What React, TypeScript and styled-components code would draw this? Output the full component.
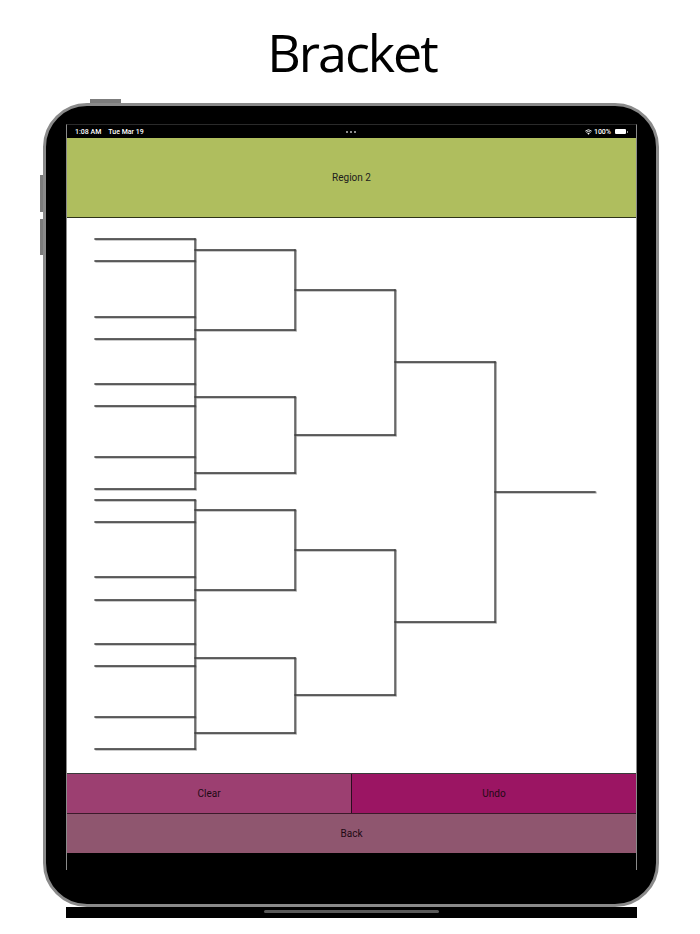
import styled, { createGlobalStyle } from "styled-components";

const GlobalStyle = createGlobalStyle`
  html, body {
    margin: 0;
    padding: 0;
    background: #ffffff;
  }
`;

const Page = styled.div`
  width: 700px;
  height: 934px;
  display: flex;
  flex-direction: column;
  align-items: flex-start;
  background: #ffffff;
  overflow: hidden;
`;

const Title = styled.h1`
  width: 100%;
  height: 103px;
  margin: 0;
  padding-left: 4px;
  box-sizing: border-box;
  display: flex;
  align-items: center;
  justify-content: center;
  font-family: "Open Sans", sans-serif;
  font-weight: 400;
  font-size: 52px;
  letter-spacing: -2px;
  color: #000;
`;

const Device = styled.div`
  position: relative;
  box-sizing: border-box;
  width: 616px;
  height: 804px;
  margin-left: 43px;
  padding: 18px 19px 0 20px;
  border: 3px solid #8a8a8a;
  border-radius: 44px;
  background: #000;
  display: flex;
  flex-direction: column;
`;

const HardwareButton = styled.span<{ $side: "top" | "left"; $offset: number; $length: number }>`
  position: absolute;
  background: #7c7c7c;
  ${(p) =>
    p.$side === "top"
      ? `top: -7px; left: ${p.$offset}px; width: ${p.$length}px; height: 4px;`
      : `left: -6px; top: ${p.$offset}px; height: ${p.$length}px; width: 3px;`}
`;

const Screen = styled.div`
  box-sizing: border-box;
  width: 571px;
  height: 746px;
  display: flex;
  flex-direction: column;
  border-top: 1px solid #2a2a2a;
  border-left: 1px solid #8a8a8a;
  border-right: 1px solid #8a8a8a;
  background: #000;
`;

const StatusBar = styled.div`
  height: 13px;
  padding: 0 10px 0 8px;
  display: flex;
  align-items: center;
  justify-content: space-between;
  font-family: Roboto, "Liberation Sans", sans-serif;
  font-weight: 500;
  font-size: 7px;
  color: #fff;
`;

const StatusGroup = styled.div`
  flex: 1;
  display: flex;
  align-items: center;
  gap: 7px;
`;

const RightGroup = styled(StatusGroup)`
  justify-content: flex-end;
  gap: 2px;
`;

const Dots = styled.div`
  display: flex;
  gap: 2px;
`;

const Dot = styled.span`
  width: 2px;
  height: 2px;
  border-radius: 50%;
  background: #bbb;
`;

const Battery = styled.span`
  position: relative;
  width: 11px;
  height: 5px;
  margin-left: 2px;
  border-radius: 1px;
  background: #fff;
  &::after {
    content: "";
    position: absolute;
    right: -2px;
    top: 1.5px;
    width: 1px;
    height: 2px;
    background: #999;
  }
`;

const RegionHeader = styled.div`
  height: 79px;
  display: flex;
  align-items: center;
  justify-content: center;
  background: #afbe5e;
  border-bottom: 1px solid #2e3318;
  font-family: Roboto, "Liberation Sans", sans-serif;
  font-size: 10px;
  color: #1c1c1c;
`;

const BracketArea = styled.div`
  height: 555px;
  display: flex;
  background: #fff;
`;

const ButtonRow = styled.div`
  display: flex;
  border-top: 1px solid #3a3a3a;
`;

const ActionButton = styled.button<{ $bg: string; $divider?: boolean }>`
  flex: 1;
  height: 39px;
  padding: 0;
  border: none;
  border-right: ${(p) => (p.$divider ? "1px solid #2b0d1e" : "none")};
  background: ${(p) => p.$bg};
  font-family: Roboto, "Liberation Sans", sans-serif;
  font-size: 10px;
  color: #1e0a14;
  cursor: pointer;
`;

const BackButton = styled(ActionButton)`
  flex: none;
  width: 100%;
  border-top: 1px solid #3b1a2a;
  height: 40px;
`;

const HomeStrip = styled.div`
  width: 571px;
  height: 11px;
  margin-left: 66px;
  background: #000;
  display: flex;
  justify-content: center;
  padding-top: 3px;
  box-sizing: border-box;
`;

const HomeIndicator = styled.span`
  width: 175px;
  height: 3px;
  border-radius: 2px;
  background: #5a5a5a;
`;

type Seg = [number, number, number, number];

const hLines = (ys: number[], x1: number, x2: number): Seg[] => ys.map((y) => [x1, y, x2, y]);

const segments: Seg[] = [
  ...hLines([239, 261, 317, 339, 384, 406, 457, 489, 500, 522, 577, 600, 644, 666, 717, 749], 95, 195),
  [195, 239, 195, 489],
  [195, 500, 195, 749],
  ...hLines([250, 330, 397, 473, 510, 590, 658, 733], 195, 295),
  [295, 250, 295, 330],
  [295, 397, 295, 473],
  [295, 510, 295, 590],
  [295, 658, 295, 733],
  ...hLines([290, 435, 550, 695], 295, 395),
  [395, 290, 395, 435],
  [395, 550, 395, 695],
  ...hLines([362, 622], 395, 495),
  [495, 362, 495, 622],
  [495, 492, 595, 492],
];

function Bracket() {
  return (
    <svg width="569" height="555" viewBox="67 218 569 555">
      <defs>
        <filter id="lineShadow" x="-10%" y="-10%" width="120%" height="120%">
          <feDropShadow dx="1" dy="0.6" stdDeviation="0.7" floodColor="#000" floodOpacity="0.45" />
        </filter>
      </defs>
      <g stroke="#3b3b3b" strokeWidth="1.3" filter="url(#lineShadow)" strokeLinecap="square">
        {segments.map(([x1, y1, x2, y2], i) => (
          <line key={i} x1={x1} y1={y1} x2={x2} y2={y2} />
        ))}
      </g>
    </svg>
  );
}

function WifiIcon() {
  return (
    <svg width="7" height="6" viewBox="0 0 14 11">
      <path d="M7 11 L4.6 8.3 A3.5 3.5 0 0 1 9.4 8.3 Z" fill="#fff" />
      <path d="M2.6 6.2 A6.4 6.4 0 0 1 11.4 6.2" stroke="#fff" strokeWidth="1.8" fill="none" />
      <path d="M0.6 3.8 A9.4 9.4 0 0 1 13.4 3.8" stroke="#fff" strokeWidth="1.8" fill="none" />
    </svg>
  );
}

export default function App() {
  return (
    <>
      <GlobalStyle />
      <Page>
        <Title>Bracket</Title>
        <Device>
          <HardwareButton $side="top" $offset={44} $length={31} />
          <HardwareButton $side="left" $offset={69} $length={37} />
          <HardwareButton $side="left" $offset={113} $length={36} />
          <Screen>
            <StatusBar>
              <StatusGroup>
                <span>1:08 AM</span>
                <span>Tue Mar 19</span>
              </StatusGroup>
              <Dots>
                <Dot />
                <Dot />
                <Dot />
              </Dots>
              <RightGroup>
                <WifiIcon />
                <span>100%</span>
                <Battery />
              </RightGroup>
            </StatusBar>
            <RegionHeader>Region 2</RegionHeader>
            <BracketArea>
              <Bracket />
            </BracketArea>
            <ButtonRow>
              <ActionButton $bg="#9c3f71" $divider>
                Clear
              </ActionButton>
              <ActionButton $bg="#9b1563">Undo</ActionButton>
            </ButtonRow>
            <BackButton $bg="#8f566f">Back</BackButton>
          </Screen>
        </Device>
        <HomeStrip>
          <HomeIndicator />
        </HomeStrip>
      </Page>
    </>
  );
}
